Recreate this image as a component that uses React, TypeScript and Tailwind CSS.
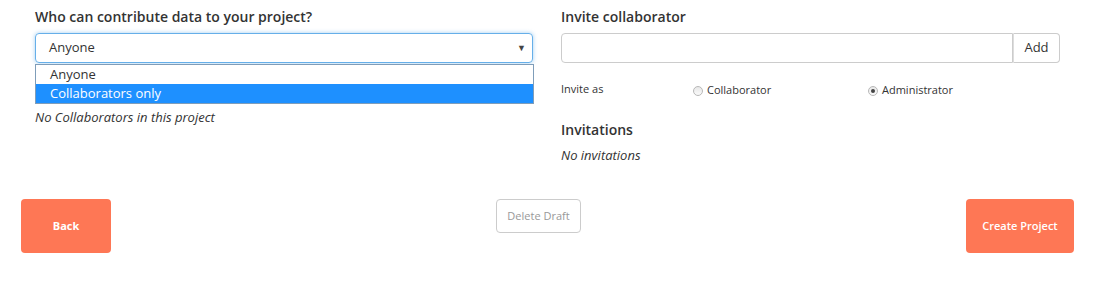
const font = { fontFamily: '"Open Sans", "Liberation Sans", sans-serif' };

function Radio({ checked, label }: { checked?: boolean; label: string }) {
  return (
    <label className="flex items-center gap-[4px] text-[11px] text-[#333]">
      <span className="w-[10px] h-[10px] rounded-full border border-[#b8b8b8] bg-gradient-to-b from-[#e8e8e8] to-[#fafafa] flex items-center justify-center">
        {checked && <span className="w-[4px] h-[4px] rounded-full bg-[#444]" />}
      </span>
      {label}
    </label>
  );
}

export default function App() {
  return (
    <div className="w-[1098px] h-[281px] bg-white text-[#333]" style={font}>
      <div className="flex pl-[35px] gap-[28px]">
        {/* left column */}
        <div className="w-[498px]">
          <h3 className="text-[14px] font-semibold leading-[20px] pt-[7px] mb-[6px]">
            Who can contribute data to your project?
          </h3>
          <div className="relative">
            <div className="h-[30px] border border-[#66afe9] rounded-[4px] shadow-[0_0_4px_rgba(102,175,233,0.6)] flex items-center justify-between pl-[13px] pr-[6px] text-[13px]">
              <span>Anyone</span>
              <span className="text-[9px] text-[#444]">▼</span>
            </div>
            <ul className="absolute left-0 top-[31px] w-[499px] border border-[#7f9db9] bg-white text-[13px] leading-[19px]">
              <li className="pl-[14px] h-[19px]">Anyone</li>
              <li className="pl-[14px] h-[19px] bg-[#1e90ff] text-white">Collaborators only</li>
            </ul>
          </div>
          <p className="mt-[45px] text-[13px] italic leading-[18px]">No Collaborators in this project</p>
        </div>

        {/* right column */}
        <div className="w-[499px]">
          <h3 className="text-[14px] font-semibold leading-[20px] pt-[7px] mb-[6px]">Invite collaborator</h3>
          <div className="flex h-[30px]">
            <input className="flex-1 border border-[#ccc] rounded-l-[4px] outline-none" />
            <button className="w-[47px] border border-[#ccc] border-l-[#ddd] rounded-r-[4px] text-[13px] bg-white">
              Add
            </button>
          </div>
          <div className="flex items-center mt-[18px] h-[16px]">
            <span className="w-[132px] text-[11px]">Invite as</span>
            <div className="w-[175px] pt-[3px]">
              <Radio label="Collaborator" />
            </div>
            <div className="pt-[3px]">
              <Radio checked label="Administrator" />
            </div>
          </div>
          <h3 className="text-[14px] font-semibold leading-[20px] mt-[23px]">Invitations</h3>
          <p className="text-[13px] italic leading-[18px] mt-[6px]">No invitations</p>
        </div>
      </div>

      {/* footer buttons */}
      <div className="flex items-start justify-between pl-[21px] pr-[24px] mt-[35px]">
        <button className="w-[90px] h-[54px] rounded-[4px] bg-[#fe7755] text-white text-[11px] font-bold">
          Back
        </button>
        <button className="w-[85px] h-[34px] rounded-[4px] border border-[#ccc] bg-white text-[11px] text-[#999]">
          Delete Draft
        </button>
        <button className="w-[108px] h-[54px] rounded-[4px] bg-[#fe7755] text-white text-[11px] font-semibold">
          Create Project
        </button>
      </div>
    </div>
  );
}
